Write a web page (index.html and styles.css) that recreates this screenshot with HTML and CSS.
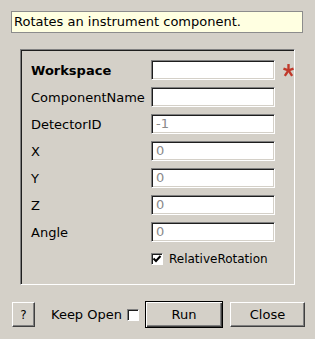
FILE: index.html
```html
<!DOCTYPE html>
<html lang="en">
<head>
    <meta charset="UTF-8">
    <title>MoveInstrumentComponent</title>
    <link rel="stylesheet" href="styles.css">
</head>
<body>
    <div class="tooltip">Rotates an instrument component.</div>

    <div class="frame">
        <div class="grid">
            <label class="bold">Workspace</label>
            <div class="field"></div>
            <svg class="star" width="11" height="14" viewBox="0 0 12 15">
                <g stroke="#c0392b" stroke-width="2.6" stroke-linecap="butt">
                    <line x1="6" y1="8" x2="6" y2="1"/>
                    <line x1="6" y1="8" x2="11.5" y2="6"/>
                    <line x1="6" y1="8" x2="10" y2="14"/>
                    <line x1="6" y1="8" x2="2" y2="14"/>
                    <line x1="6" y1="8" x2="0.5" y2="6"/>
                </g>
            </svg>

            <label>ComponentName</label>
            <div class="field"></div>
            <span></span>

            <label>DetectorID</label>
            <div class="field">-1</div>
            <span></span>

            <label>X</label>
            <div class="field">0</div>
            <span></span>

            <label>Y</label>
            <div class="field">0</div>
            <span></span>

            <label>Z</label>
            <div class="field">0</div>
            <span></span>

            <label>Angle</label>
            <div class="field">0</div>
            <span></span>

            <span></span>
            <div class="check-row">
                <span class="check">
                    <svg width="10" height="10" viewBox="0 0 10 10">
                        <polyline points="1.5,4.5 4,7 8.5,2" fill="none" stroke="#000" stroke-width="2"/>
                    </svg>
                </span>
                <span class="check-label">RelativeRotation</span>
            </div>
            <span></span>
        </div>
    </div>

    <div class="buttons">
        <button class="btn help">?</button>
        <span class="keep">Keep Open</span>
        <span class="check"></span>
        <button class="btn run">Run</button>
        <button class="btn close">Close</button>
    </div>
</body>
</html>
```

FILE: styles.css
```css
body {
    margin: 0;
    width: 315px;
    height: 339px;
    background-color: #d4d0c8;
    font-family: "DejaVu Sans", sans-serif;
    font-size: 13px;
    color: #000;
    overflow: hidden;
}
.tooltip {
    margin: 11px 0 0 11px;
    width: 292px;
    height: 22px;
    box-sizing: border-box;
    border: 1px solid #8c8c8c;
    background-color: #ffffe1;
    padding: 0 2px;
    line-height: 20px;
}
.frame {
    margin: 16px 0 0 20px;
    width: 275px;
    height: 236px;
    box-sizing: border-box;
    border: 1px solid;
    border-color: #808080 #fff #fff #808080;
    box-shadow: inset 1px 1px 0 #1e1e1e;
    padding: 10px 0 0 10px;
}
.grid {
    display: grid;
    grid-template-columns: 120px 124px 1fr;
    grid-auto-rows: 20px;
    row-gap: 7px;
    align-items: center;
}
.bold {
    font-weight: bold;
}
.field {
    height: 20px;
    box-sizing: border-box;
    background-color: #fff;
    border: 1px solid;
    border-color: #808080 #fff #fff #808080;
    box-shadow: inset 1px 1px 0 #1e1e1e, inset -1px -1px 0 #d4d0c8;
    padding: 0 4px;
    line-height: 18px;
    color: #8a8a8a;
}
.star {
    margin-left: 8px;
}
.check-row {
    display: flex;
    align-items: center;
    gap: 6px;
}
.check-label {
    font-size: 12px;
}
.check {
    width: 12px;
    height: 12px;
    box-sizing: border-box;
    background-color: #fff;
    border: 1px solid;
    border-color: #808080 #fff #fff #808080;
    box-shadow: inset 1px 1px 0 #1e1e1e;
    display: flex;
    align-items: center;
    justify-content: center;
}
.buttons {
    display: flex;
    align-items: center;
    margin-top: 16px;
    padding-left: 12px;
}
.btn {
    font-family: "DejaVu Sans", sans-serif;
    font-size: 13px;
    color: #000;
    background-color: #d4d0c8;
    height: 25px;
    box-sizing: border-box;
    border: 1px solid;
    border-color: #fff #404040 #404040 #fff;
    box-shadow: inset -1px -1px 0 #808080;
    padding: 0;
}
.help {
    width: 23px;
    font-size: 12px;
}
.keep {
    margin-left: 16px;
    margin-right: 5px;
}
.run {
    margin-left: 6px;
    width: 78px;
    height: 27px;
    border: 1px solid #000;
    box-shadow: inset 1px 1px 0 #fff, inset -1px -1px 0 #404040, inset -2px -2px 0 #808080;
}
.close {
    margin-left: 7px;
    width: 75px;
}
```
